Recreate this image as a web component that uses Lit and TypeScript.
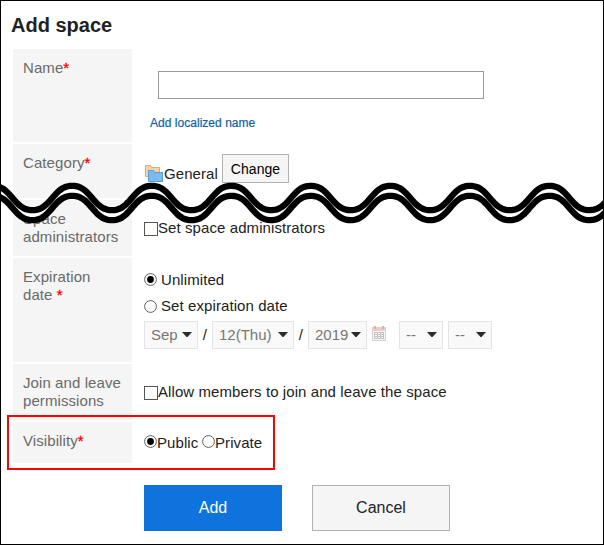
import { LitElement, html, css, svg } from "lit";
import { customElement, property } from "lit/decorators.js";

@customElement("radio-mark")
class RadioMark extends LitElement {
  @property({ type: Boolean }) on = false;
  static styles = css`
    :host { display: block; width: 13px; height: 13px; flex: none; }
    svg { display: block; }
  `;
  render() {
    return html`<svg width="13" height="13" viewBox="0 0 13 13">
      <circle cx="6.5" cy="6.5" r="5.9" fill="#fff" stroke="#606060" stroke-width="1" />
      ${this.on ? svg`<circle cx="6.5" cy="6.5" r="3.4" fill="#000" />` : null}
    </svg>`;
  }
}

@customElement("date-select")
class DateSelect extends LitElement {
  @property() value = "";
  static styles = css`
    :host {
      display: flex; box-sizing: border-box; height: 28px; flex: none;
      justify-content: space-between; align-items: flex-start;
      border: 1px solid #e4e4e4; background: #f9f9f9; color: #777;
      padding: 4px 5px 0 6px; line-height: 17px; white-space: nowrap; letter-spacing: 0;
    }
    svg { display: block; margin-top: 6px; }
  `;
  render() {
    return html`<span>${this.value}</span>
      <svg width="10" height="5" viewBox="0 0 10 5"><path d="M0 0H10L5.5 5H4.5Z" fill="#2b2b2b" /></svg>`;
  }
}

/* One line of the tear, sampled every two pixels; the third harmonic flattens the crests. */
const wave = (mid: number, back = false): string => {
  const pts: string[] = [];
  for (let x = -4; x <= 608; x += 2) {
    const t = ((x - 72.2) * 2 * Math.PI) / 79.55;
    const y = mid - 12.8 * (Math.cos(t) - 0.05 * Math.cos(3 * t));
    pts.push(`${x} ${y.toFixed(2)}`);
  }
  if (back) pts.reverse();
  return pts.join("L");
};

@customElement("app-root")
class AppRoot extends LitElement {
  static styles = css`
    :host {
      display: block; position: relative; box-sizing: border-box;
      width: 604px; height: 545px; border: 1px solid #000; background: #fff;
      overflow: hidden; color: #222; letter-spacing: 0.085px;
      font: 15px/18px "Liberation Sans", Arial, sans-serif;
    }
    h1 { margin: 0; padding: 12px 0 0 10px; height: 36px; font-size: 20px; line-height: 24px; font-weight: bold; letter-spacing: 0; }
    .form { display: grid; grid-template-rows: 93px 54px 56px 104px 56px 41px; row-gap: 2px; padding-left: 12px; }
    .row { display: grid; grid-template-columns: 119px 1fr; column-gap: 12px; }
    .label { background: #f5f5f5; color: #6a6a6a; padding: 10px 10px 0 10px; }
    .req { color: #f00; -webkit-text-stroke: 0.35px #f00; }
    .line { display: flex; white-space: nowrap; }
    .name { padding: 22px 0 0 14px; }
    .input { display: block; box-sizing: border-box; width: 326px; height: 28px; border: 1px solid #999; padding: 0; margin: 0; background: #fff; }
    .link { display: block; margin: 16px 0 0 -8px; font-size: 12px; line-height: 16px; color: #0c5fae; -webkit-text-stroke: 0.2px #0c5fae; text-decoration: none; letter-spacing: 0.03px; }
    .category { padding-top: 10px; align-items: flex-start; }
    .folder { display: block; margin: 11px 1px 0 1px; }
    .general { width: 58px; padding-top: 11px; }
    button { display: block; box-sizing: border-box; margin: 0; padding: 0; border: 1px solid #b2b2b2; background: #f5f5f5; font: inherit; color: #222; }
    .change { width: 67px; height: 29px; font-size: 14px; line-height: 16px; color: #000; letter-spacing: 0.05px; }
    .box { box-sizing: border-box; width: 14px; height: 14px; border: 1px solid #555; background: #fff; flex: none; }
    .check { align-items: flex-start; padding-top: 22px; }
    .check span { margin-top: -3px; }
    .unlimited { padding-top: 15px; height: 26px; gap: 4px; align-items: flex-start; }
    .unlimited span { margin-top: -2px; }
    .until span { margin-top: -3px; }
    .until { height: 22px; gap: 4px; padding-top: 1px; box-sizing: border-box; }
    .date { align-items: flex-start; }
    .slash { padding: 5px 0 0; width: 14px; text-align: center; line-height: 17px; flex: none; }
    .month { width: 54px; } .day { width: 82px; } .year { width: 59px; } .time { width: 44px; margin-right: 5px; }
    .cal { display: block; margin: 5px 12px 0 5px; flex: none; }
    .visibility { padding-top: 13px; }
    .visibility span { line-height: 16px; }
    .public { width: 45px; }
    .actions { display: flex; gap: 30px; padding: 22px 0 0 143px; }
    .actions button { width: 138px; height: 46px; font-size: 16px; line-height: 18px; }
    .actions .add { background: #0f73dd; border-color: #0f73dd; color: #fff; }
    .tear { position: absolute; left: 0; top: 0; pointer-events: none; }
    .marker { position: absolute; left: 6px; top: 414px; width: 268px; height: 55px; box-sizing: border-box; border: 2px solid #f00; }
  `;

  render() {
    return html`
      <h1>Add space</h1>
      <div class="form">
        <div class="row">
          <div class="label">Name<span class="req">*</span></div>
          <div class="name"><input class="input" /><a class="link">Add localized name</a></div>
        </div>
        <div class="row">
          <div class="label">Category<span class="req">*</span></div>
          <div class="line category">
            <svg class="folder" width="18" height="17" viewBox="0 0 18 17">
              <path d="M.5 11.5V.5H5.5L6.5 2.5H14.5V11.5Z" fill="#fccfab" stroke="#e5a874" />
              <path d="M3.5 16.5V5.5H8.5L9.5 7.5H17.5V16.5Z" fill="#7cbcea" stroke="#4f9fdd" />
            </svg>
            <span class="general">General</span><button class="change">Change</button>
          </div>
        </div>
        <div class="row">
          <div class="label">Space administrators</div>
          <div class="line check"><i class="box"></i><span>Set space administrators</span></div>
        </div>
        <div class="row">
          <div class="label">Expiration<br />date <span class="req">*</span></div>
          <div>
            <div class="line unlimited"><radio-mark on></radio-mark><span>Unlimited</span></div>
            <div class="line until"><radio-mark></radio-mark><span>Set expiration date</span></div>
            <div class="line date">
              <date-select class="month" value="Sep"></date-select><span class="slash">/</span>
              <date-select class="day" value="12(Thu)"></date-select><span class="slash">/</span>
              <date-select class="year" value="2019"></date-select>
              <svg class="cal" width="15" height="15" viewBox="0 0 15 15">
                <path d="M0 4H14V15H0Z" fill="#d2d2d2" />
                <path d="M1 5H13V14H1Z" fill="#f7f7f7" />
                <path d="M0 1H14V4.5H0Z" fill="#fcc6c0" />
                <path d="M2 0H4V3H2ZM10 0H12V3H10Z" fill="#bdbdbd" />
                <path d="M2 6H12V13H2Z" fill="#c2c2c2" />
                <path d="M3 7H5V8H3ZM6 7H8V8H6ZM9 7H11V8H9ZM3 9H5V10H3ZM6 9H8V10H6ZM9 9H11V10H9ZM3 11H5V12H3ZM6 11H8V12H6ZM9 11H11V12H9Z" fill="#fff" />
              </svg>
              <date-select class="time" value="--"></date-select>
              <date-select class="time" value="--"></date-select>
            </div>
          </div>
        </div>
        <div class="row">
          <div class="label">Join and leave permissions</div>
          <div class="line check"><i class="box"></i><span>Allow members to join and leave the space</span></div>
        </div>
        <div class="row">
          <div class="label">Visibility<span class="req">*</span></div>
          <div class="line visibility">
            <radio-mark on></radio-mark><span class="public">Public</span>
            <radio-mark></radio-mark><span>Private</span>
          </div>
        </div>
      </div>
      <div class="actions"><button class="add">Add</button><button>Cancel</button></div>
      <svg class="tear" width="602" height="543" viewBox="1 1 602 543">
        <path d="M${wave(198)}L${wave(208, true)}Z" fill="#fff" />
        <path d="M${wave(198)}M${wave(208)}" fill="none" stroke="#000" stroke-width="6.3" />
      </svg>
      <div class="marker"></div>
    `;
  }
}
